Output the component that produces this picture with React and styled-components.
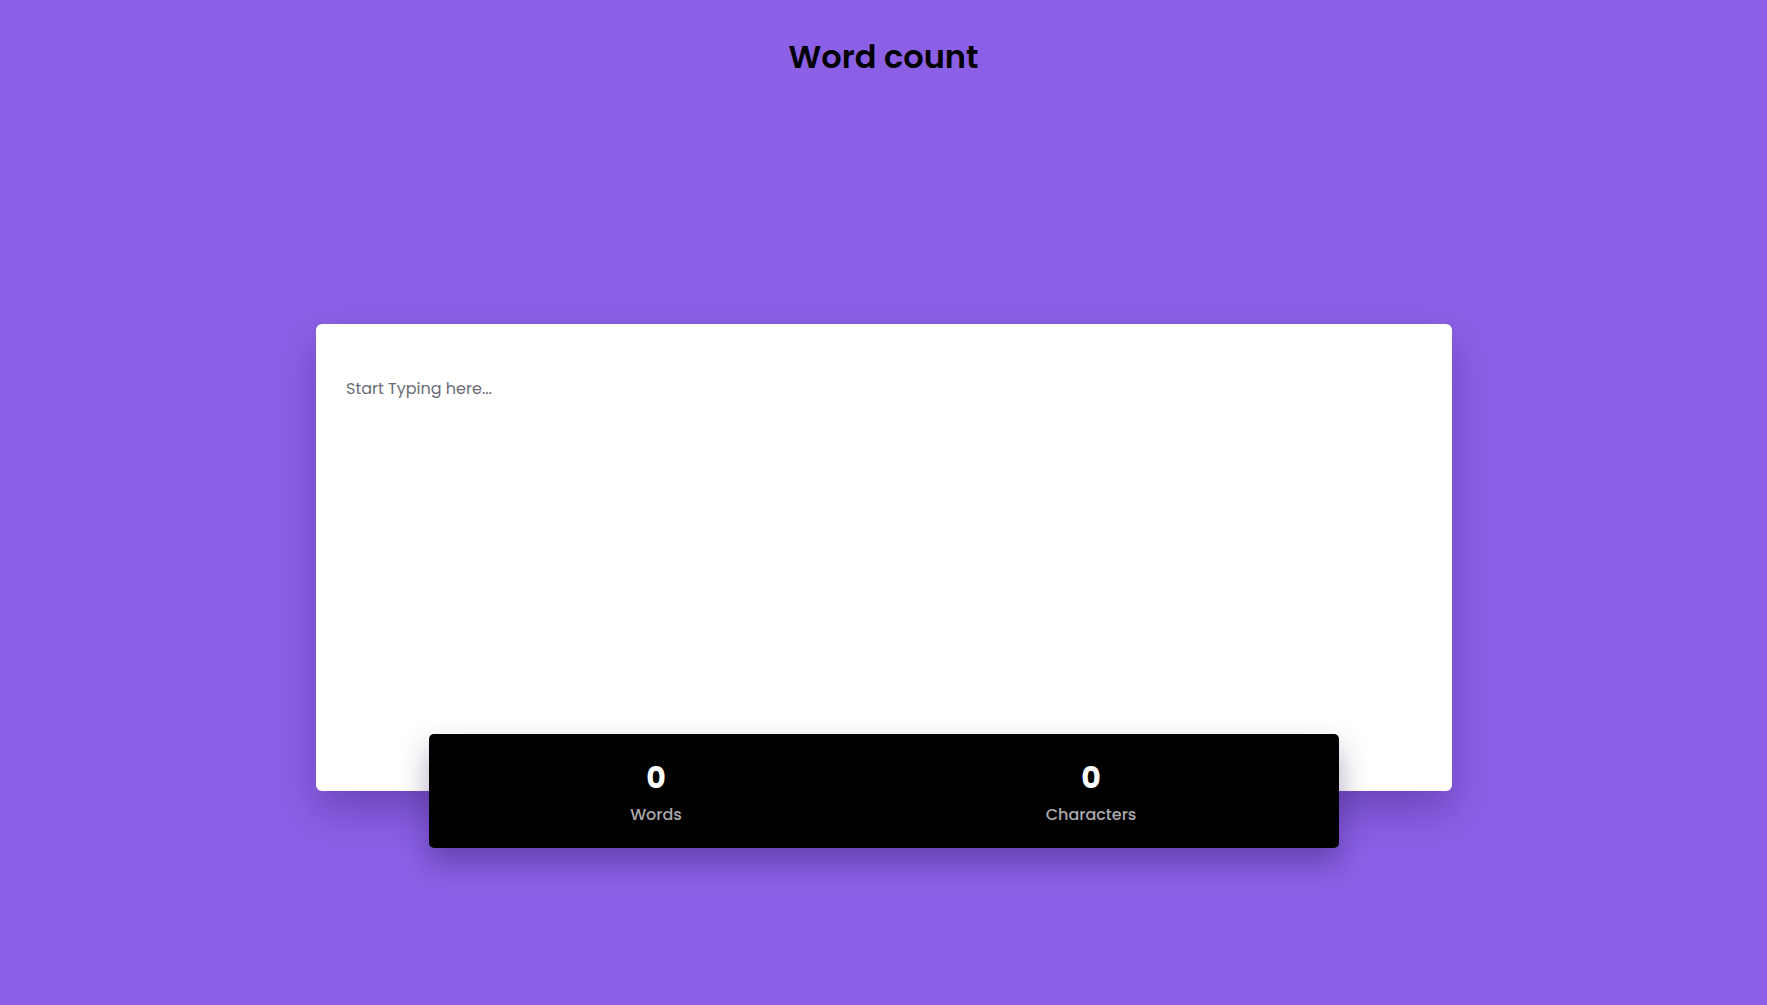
import React, { useState } from 'react';
import styled, { createGlobalStyle } from 'styled-components';

const GlobalStyle = createGlobalStyle`
  * { box-sizing: border-box; }
  body {
    margin: 0;
    background: #8b60e6;
    font-family: Poppins, "Open Sans", "Noto Sans", sans-serif;
  }
`;

const Page = styled.div`
  min-height: 100vh;
  display: flex;
  flex-direction: column;
  align-items: center;
  padding-top: 33px;
`;

const Title = styled.h1`
  margin: 0;
  font-size: 32px;
  line-height: 48px;
  font-weight: 600;
  color: #000;
`;

const Counter = styled.div`
  margin-top: 243px;
  padding-left: 1px;
  display: flex;
  flex-direction: column;
  align-items: center;
`;

const Card = styled.div`
  width: 1136px;
  height: 467px;
  background: #fff;
  border-radius: 6px;
  box-shadow: 0 20px 40px rgba(40, 10, 90, 0.3);
`;

const TextArea = styled.textarea`
  width: 100%;
  height: 100%;
  border: none;
  outline: none;
  resize: none;
  background: transparent;
  padding: 52px 30px 30px;
  font-family: inherit;
  font-size: 16px;
  color: #333;

  &::placeholder {
    color: #6b6b78;
  }
`;

const Stats = styled.div`
  width: 910px;
  height: 114px;
  margin-top: -57px;
  background: #000;
  border-radius: 5px;
  display: grid;
  grid-template-columns: 454px 416px 1fr;
  box-shadow: 0 15px 30px rgba(30, 10, 70, 0.35);
  position: relative;
`;

const Stat = styled.div`
  display: flex;
  flex-direction: column;
  align-items: center;
  justify-content: center;
  padding-top: 4px;
`;

const Value = styled.span`
  font-size: 30px;
  font-weight: 700;
  line-height: 36px;
  color: #fff;
`;

const Label = styled.span`
  margin-top: 7px;
  font-size: 16px;
  font-weight: 500;
  line-height: 24px;
  color: #a9a9ad;
`;

export default function App() {
  const [text, setText] = useState('');
  const words = text.trim() ? text.trim().split(/\s+/).length : 0;

  return (
    <Page>
      <GlobalStyle />
      <Title>Word count</Title>
      <Counter>
        <Card>
          <TextArea
            placeholder="Start Typing here..."
            value={text}
            onChange={(e) => setText(e.target.value)}
          />
        </Card>
        <Stats>
          <Stat>
            <Value>{words}</Value>
            <Label>Words</Label>
          </Stat>
          <Stat>
            <Value>{text.length}</Value>
            <Label>Characters</Label>
          </Stat>
        </Stats>
      </Counter>
    </Page>
  );
}
